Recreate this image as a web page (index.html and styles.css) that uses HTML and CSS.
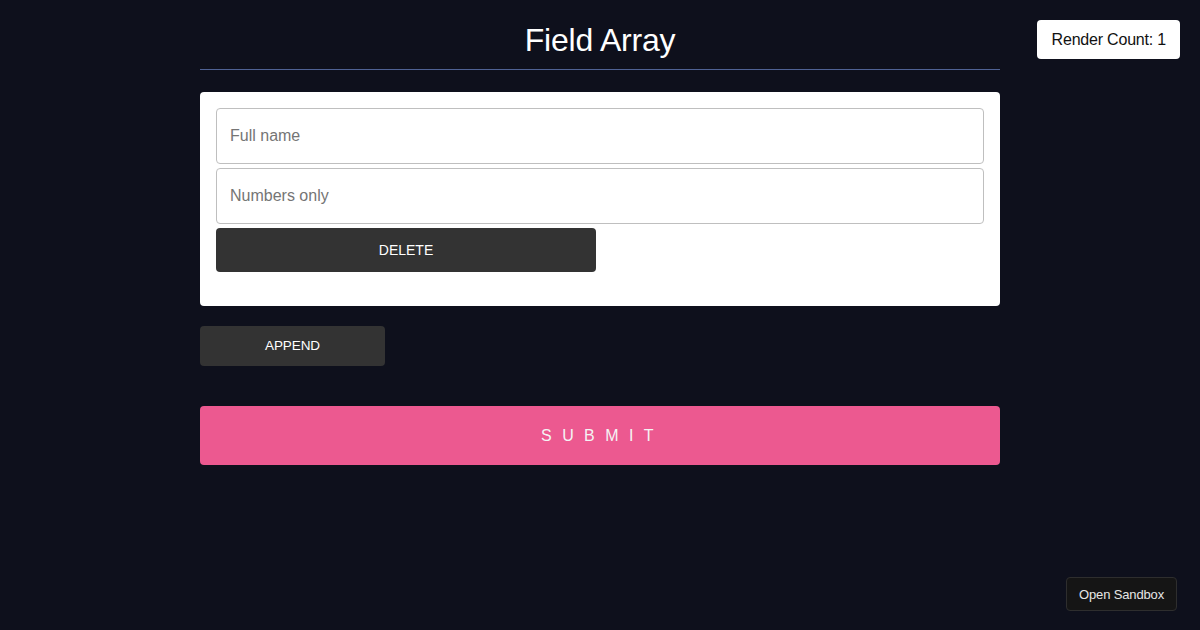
FILE: index.html
```html
<!DOCTYPE html>
<html lang="en">
<head>
<meta charset="utf-8">
<title>Field Array</title>
<link rel="stylesheet" href="styles.css">
</head>
<body>
  <div class="container">
    <h1 class="title">Field Array</h1>
    <form class="form">
      <div class="card">
        <div class="item">
          <input class="field" type="text" placeholder="Full name">
          <input class="field" type="text" placeholder="Numbers only">
          <button type="button" class="btn btn-delete">Delete</button>
        </div>
      </div>
      <button type="button" class="btn btn-append">Append</button>
      <button type="submit" class="btn-submit">Submit</button>
    </form>
  </div>
  <div class="render-count">Render Count: 1</div>
  <a class="sandbox-link">Open Sandbox</a>
</body>
</html>
```

FILE: styles.css
```css
html, body {
  margin: 0;
  padding: 0;
  background: #0e101c;
  height: 100%;
}

body {
  font-family: "Liberation Sans", Arial, Helvetica, sans-serif;
  color: #ffffff;
}

.container {
  max-width: 800px;
  margin: 0 auto;
}

.title {
  margin: 0;
  padding: 22px 0 11px;
  font-size: 32px;
  font-weight: 400;
  line-height: 36px;
  letter-spacing: -0.2px;
  text-align: center;
  color: #ffffff;
  border-bottom: 1px solid #4f6294;
}

.form {
  display: flex;
  flex-direction: column;
  margin-top: 22px;
}

.card {
  background: #ffffff;
  border-radius: 4px;
  padding: 16px 16px 34px;
}

.item {
  display: flex;
  flex-direction: column;
  gap: 4px;
}

.field {
  box-sizing: border-box;
  display: block;
  width: 100%;
  height: 56px;
  margin: 0;
  padding: 0 13px;
  border: 1px solid #bfbfbf;
  border-radius: 4px;
  font-family: inherit;
  font-size: 16px;
  color: #222;
  background: #ffffff;
}

.field::placeholder {
  color: #757575;
}

.btn {
  box-sizing: border-box;
  border: none;
  border-radius: 4px;
  background: #333333;
  color: #ffffff;
  font-family: inherit;
  font-size: 14px;
  text-transform: uppercase;
  cursor: pointer;
  padding: 0;
}

.btn-delete {
  width: 380px;
  height: 44px;
}

.btn-append {
  align-self: flex-start;
  width: 185px;
  height: 40px;
  margin-top: 20px;
  font-size: 13.5px;
  letter-spacing: -0.1px;
  padding-bottom: 1px;
}

.btn-submit {
  box-sizing: border-box;
  margin-top: 40px;
  width: 100%;
  height: 59px;
  padding: 0 0 0 5px;
  border: none;
  border-radius: 4px;
  background: #ec5990;
  color: #f4f4f4;
  font-family: inherit;
  font-size: 16px;
  font-weight: 400;
  letter-spacing: 10.4px;
  text-transform: uppercase;
}

.render-count {
  position: fixed;
  top: 20px;
  right: 20px;
  box-sizing: border-box;
  height: 39px;
  padding: 0 14px 0 15px;
  display: flex;
  align-items: center;
  background: #ffffff;
  color: #111111;
  border-radius: 4px;
  font-size: 16px;
  letter-spacing: -0.2px;
}

.sandbox-link {
  position: fixed;
  right: 23px;
  bottom: 19px;
  box-sizing: border-box;
  height: 34px;
  padding: 0 12px;
  display: flex;
  align-items: center;
  background: #151515;
  border: 1px solid #2e2e2e;
  border-radius: 4px;
  color: #e6e6e6;
  font-size: 13px;
  letter-spacing: -0.15px;
}
```
